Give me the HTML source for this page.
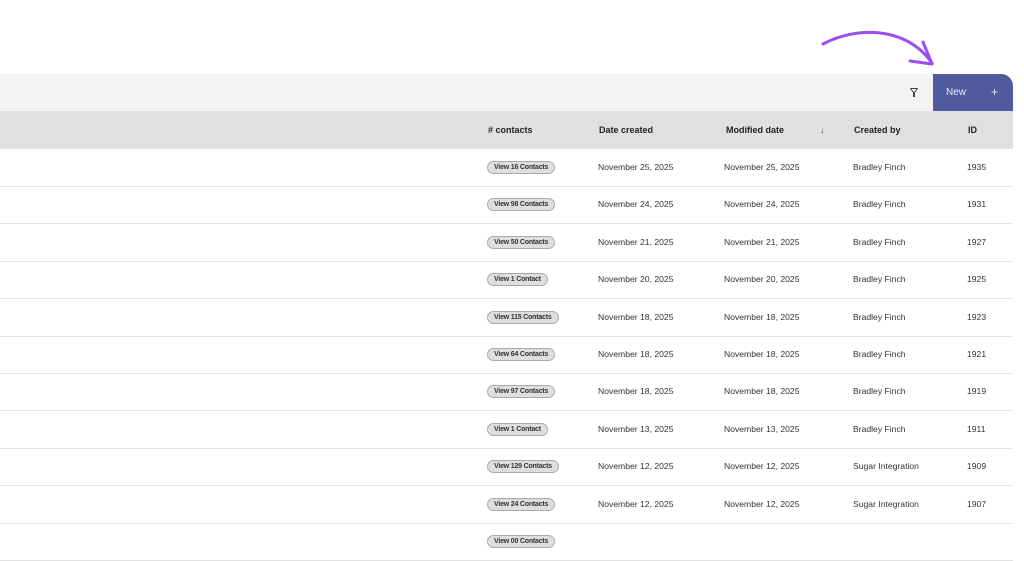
<!DOCTYPE html>
<html><head><style>
body{margin:0;width:1024px;height:536px;overflow:hidden;background:#fff;font-family:"Liberation Sans",sans-serif;position:relative}
.bar{position:absolute;left:0;top:74px;width:933px;height:37px;background:#f3f3f3}
.new{position:absolute;left:933px;top:74px;width:80px;height:37px;background:#4f5b9e;border-top-right-radius:12px;color:#e8eaf5;font-size:10px}
.hdr{position:absolute;left:0;top:111px;width:1013px;height:38px;background:#e0e0e0;font-size:9px;font-weight:bold;color:#222}
.a{position:absolute}
.row{position:absolute;left:0;width:1013px;height:37px;border-bottom:1px solid #e2e2e2;font-size:8.6px;color:#333}
.pill{position:absolute;left:487px;top:12px;height:11px;line-height:11px;padding:0 6px;background:#dedede;border:1px solid #aaa;border-radius:7px;font-size:7px;font-weight:bold;color:#333;letter-spacing:-0.2px}
.c{position:absolute;top:13px}
</style></head><body>
<svg class="a" style="left:815px;top:25px" width="125" height="50"><path d="M8 19 C40 2 90 0 117 38" fill="none" stroke="#9a4cf7" stroke-width="3" stroke-linecap="round"/><path d="M108 17 L117 39 L95 36" fill="none" stroke="#9a4cf7" stroke-width="3" stroke-linecap="round" stroke-linejoin="round"/></svg>
<div class="bar"><svg class="a" style="left:910px;top:14px" width="8" height="9"><path d="M0.5 0.5H7.5L4.5 4.5V8.5H3.5V4.5Z" fill="none" stroke="#444" stroke-width="1"/></svg></div>
<div class="new"><span class="a" style="left:13px;top:13px">New</span><span class="a" style="left:58px;top:11px;font-size:12px">+</span></div>
<div class="hdr">
<span class="a" style="left:488px;top:14px">#&nbsp;contacts</span>
<span class="a" style="left:599px;top:14px">Date created</span>
<span class="a" style="left:726px;top:14px">Modified date</span>
<span class="a" style="left:820px;top:14px;font-weight:normal;color:#555">↓</span>
<span class="a" style="left:854px;top:14px">Created by</span>
<span class="a" style="left:968px;top:14px">ID</span>
</div>
<div id="rows"></div>
<script>
var d=[["16","November 25, 2025","Bradley Finch","1935"],["98","November 24, 2025","Bradley Finch","1931"],["50","November 21, 2025","Bradley Finch","1927"],["1","November 20, 2025","Bradley Finch","1925"],["115","November 18, 2025","Bradley Finch","1923"],["64","November 18, 2025","Bradley Finch","1921"],["97","November 18, 2025","Bradley Finch","1919"],["1","November 13, 2025","Bradley Finch","1911"],["129","November 12, 2025","Sugar Integration","1909"],["24","November 12, 2025","Sugar Integration","1907"],["","","",""]];
var h="";d.forEach(function(r,i){var t=149+i*37.4;
h+='<div class="row" style="top:'+t+'px">'+(r[0]||i==10?'<span class="pill">View '+(r[0]||'00')+' Contact'+(r[0]=="1"?'':'s')+'</span>':'')+
'<span class="c" style="left:598px">'+r[1]+'</span><span class="c" style="left:724px">'+r[1]+'</span><span class="c" style="left:853px">'+r[2]+'</span><span class="c" style="left:967px">'+r[3]+'</span></div>';});
document.getElementById("rows").innerHTML=h;
</script>
</body></html>
